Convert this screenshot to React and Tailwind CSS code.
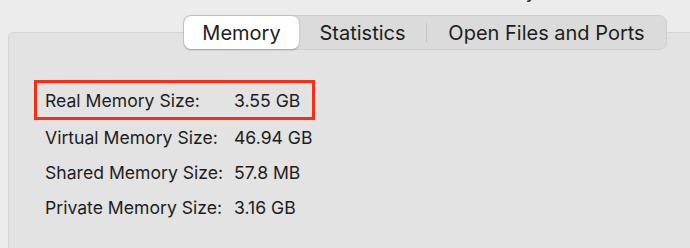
const rows = [
  { label: 'Real Memory Size:', value: '3.55 GB' },
  { label: 'Virtual Memory Size:', value: '46.94 GB' },
  { label: 'Shared Memory Size:', value: '57.8 MB' },
  { label: 'Private Memory Size:', value: '3.16 GB' },
];

export default function App() {
  return (
    <div className="w-[690px] h-[248px] overflow-hidden bg-[#ececec] text-[#1d1d1d] font-['Inter',sans-serif]">
      {/* bottom of the window title, cut off by the crop */}
      <div className="h-[4px] overflow-hidden">
        <div className="-mt-[15px] pl-[526px] text-[15px] leading-[18px] font-semibold text-[#333]">y</div>
      </div>

      <div className="mt-[28px] ml-[8px] w-[720px] h-[260px] rounded-[6px] border border-[#d4d4d4] bg-[#e3e3e3]">
        <div className="-mt-[18px] ml-[174px] flex h-[35px] w-[484px] items-stretch rounded-[8px] border border-[#cecece] bg-[#dbdbdb] text-[20px]">
          <div className="w-[115px] flex items-center justify-center rounded-[7px] bg-white shadow-[0_0.5px_2px_rgba(0,0,0,0.25)]">
            Memory
          </div>
          <div className="w-[127px] flex items-center justify-center">Statistics</div>
          <div className="my-[7px] w-px bg-[#c4c4c4]" />
          <div className="flex-1 flex items-center justify-center">Open Files and Ports</div>
        </div>

        <div className="mt-[30px] ml-[25px] flex flex-col text-[17.6px]">
          {rows.map((r, i) => (
            <div
              key={r.label}
              className={
                i === 0
                  ? 'flex h-[40px] w-[281px] items-center border-[3px] border-[#ff2a12] px-[8px] pt-[2px]'
                  : 'flex h-[35px] items-center px-[11px] pt-[2px]'
              }
            >
              <span className="w-[189px]">{r.label}</span>
              <span>{r.value}</span>
            </div>
          ))}
        </div>
      </div>
    </div>
  );
}
